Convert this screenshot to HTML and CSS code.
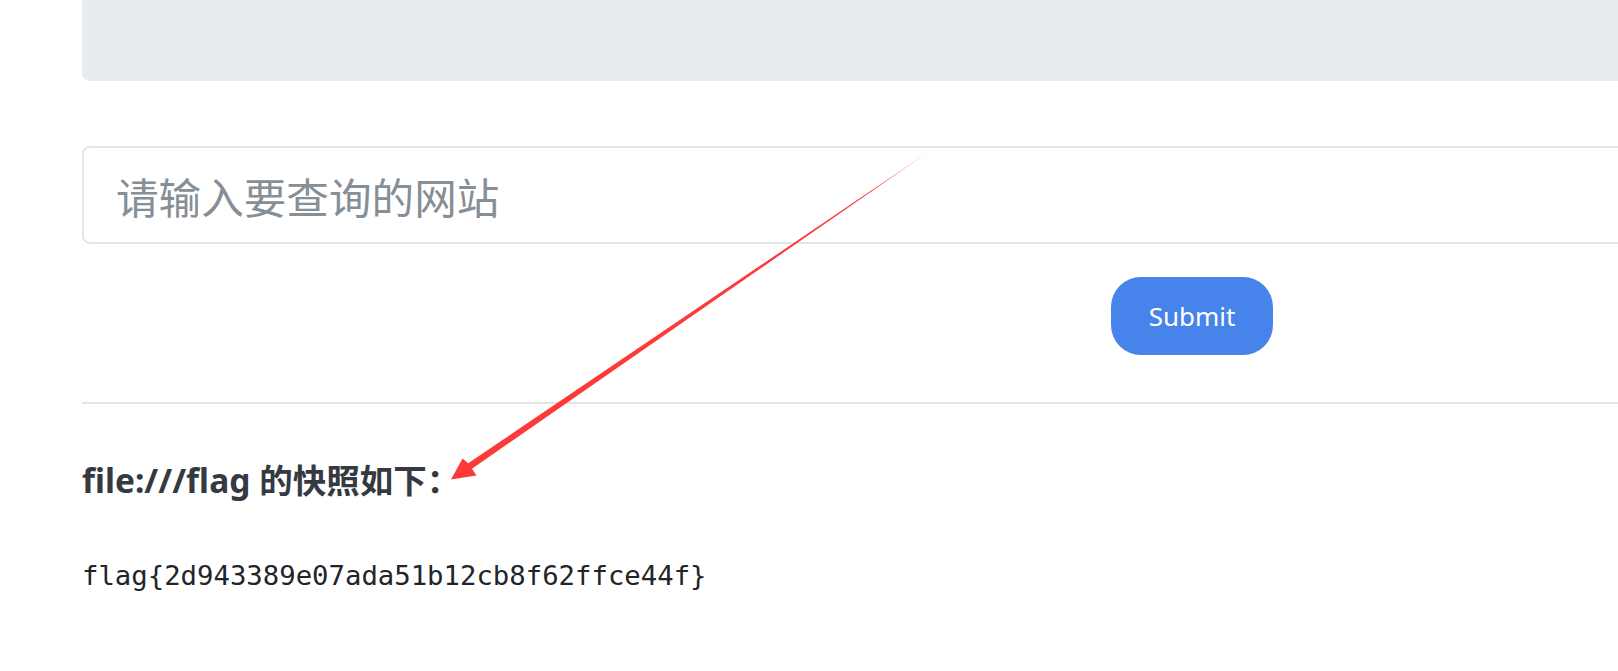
FILE: index.html
```html
<!DOCTYPE html>
<html lang="zh-CN">
<head>
    <meta charset="UTF-8">
    <meta name="viewport" content="width=device-width, initial-scale=1.0">
    <title>网站快照</title>
    <link rel="stylesheet" href="styles.css">
</head>
<body>
    <div class="page">
        <div class="banner"></div>

        <form class="query-form">
            <input class="url-input" type="text" placeholder="请输入要查询的网站">
            <div class="submit-row">
                <button class="submit-btn" type="button">Submit</button>
            </div>
        </form>

        <hr class="divider">

        <h5 class="snapshot-title">file:///flag 的快照如下：</h5>
        <pre class="snapshot-body">flag{2d943389e07ada51b12cb8f62ffce44f}</pre>
    </div>

    <!-- 标注箭头 -->
    <svg class="annotation" width="1618" height="671" viewBox="0 0 1618 671">
        <defs>
            <linearGradient id="arrowFade" gradientUnits="userSpaceOnUse" x1="937" y1="146" x2="451" y2="479">
                <stop offset="0" stop-color="#fc3a3a" stop-opacity="0.1"></stop>
                <stop offset="0.14" stop-color="#fc3a3a" stop-opacity="1"></stop>
                <stop offset="1" stop-color="#fc3a3a" stop-opacity="1"></stop>
            </linearGradient>
        </defs>
        <polygon fill="url(#arrowFade)"
                 points="937,146 468.2,463.3 462.5,458.5 451,479.5 476.5,475.5 472,468.7"></polygon>
    </svg>
</body>
</html>
```

FILE: styles.css
```css
body {
    margin: 0;
    padding: 0;
    background-color: #fff;
    overflow: hidden;
    font-family: "Noto Sans", "Noto Sans CJK SC", sans-serif;
    color: #212529;
}

.page {
    width: 2220px;
    padding-left: 82px;
}

.banner {
    height: 81px;
    background-color: #e9ecef;
    border-radius: 0 0 8px 8px;
}

.query-form {
    margin-top: 65px;
}

.url-input {
    display: block;
    box-sizing: border-box;
    width: 100%;
    height: 98px;
    padding: 0 32px;
    border: 2px solid #e3e5e8;
    border-radius: 8px;
    font-family: "Noto Sans CJK SC", sans-serif;
    font-size: 42.6px;
    color: #495057;
    outline: none;
}

.url-input::placeholder {
    color: #868e96;
}

.submit-row {
    margin-top: 33px;
    text-align: center;
}

.submit-btn {
    width: 162px;
    height: 78px;
    padding: 0;
    border: none;
    border-radius: 30px;
    background-color: #4683ea;
    color: #fff;
    font-family: "Noto Sans", sans-serif;
    font-size: 26px;
    cursor: pointer;
}

.divider {
    margin: 47px 0 0;
    border: none;
    border-top: 2px solid #e5e5e5;
}

.snapshot-title {
    margin: 56px 0 0;
    font-size: 33.5px;
    line-height: 41px;
    font-weight: 700;
    color: #343a40;
}

.snapshot-body {
    margin: 55px 0 0;
    font-family: "DejaVu Sans Mono", monospace;
    font-size: 27.3px;
    line-height: 40px;
    color: #212529;
}

.annotation {
    position: absolute;
    top: 0;
    left: 0;
    pointer-events: none;
}
```
